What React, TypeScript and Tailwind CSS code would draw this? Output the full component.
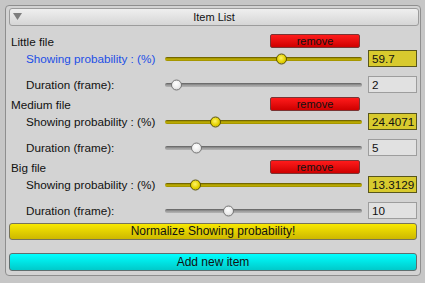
import React from "react";

type Item = { name: string; prob: number; duration: number; focused?: boolean };

const items: Item[] = [
  { name: "Little file", prob: 59.7, duration: 2, focused: true },
  { name: "Medium file", prob: 24.4071, duration: 5 },
  { name: "Big file", prob: 13.3129, duration: 10 },
];

// slider: thumb position from value
const Slider = ({ value, min, max, yellow }: { value: number; min: number; max: number; yellow?: boolean }) => {
  const t = (value - min) / (max - min);
  return (
    <div className="relative w-[197px] h-full flex items-center">
      <div
        className={
          yellow
            ? "w-full h-[4px] rounded-full bg-gradient-to-b from-[#5a5000] via-[#c4b300] to-[#9c8d00]"
            : "w-full h-[4px] rounded-full bg-gradient-to-b from-[#5e5e5e] via-[#9a9a9a] to-[#b4b4b4]"
        }
      />
      <div
        className={
          yellow
            ? "absolute top-1/2 -translate-y-1/2 w-[11px] h-[11px] rounded-full border border-[#5c5400] bg-[radial-gradient(circle_at_45%_40%,#fff36a,#e4d200_55%,#b8a800)]"
            : "absolute top-1/2 -translate-y-1/2 w-[11px] h-[11px] rounded-full border border-[#777] bg-[radial-gradient(circle_at_45%_35%,#ffffff,#ececec_55%,#c4c4c4)]"
        }
        style={{ left: `calc(${t} * (100% - 11px))` }}
      />
    </div>
  );
};

const Row = ({ label, blue, children, box, yellow }: { label: string; blue?: boolean; children: React.ReactNode; box: string; yellow?: boolean }) => (
  <div className="flex h-[17px] items-stretch">
    <span className={"w-[156px] pl-[17px] leading-[17px] " + (blue ? "text-[#1d4fe6]" : "text-[#111]")}>{label}</span>
    {children}
    <div
      className={
        yellow
          ? "ml-[6px] w-[49px] border border-[#58561c] bg-[#d8ca2e] pl-[3px] leading-[15px] text-[#111]"
          : "ml-[6px] w-[49px] border border-[#9d9d9d] bg-[#e1e1e1] pl-[3px] leading-[15px] text-[#111]"
      }
    >
      {box}
    </div>
  </div>
);

export default function App() {
  return (
    <div className="w-[425px] h-[283px] bg-[#c6c6c6] pl-[5px] pr-[4px] pt-[5px] pb-[7px] flex font-['Liberation_Sans',Arial,sans-serif] text-[11.7px]">
      <div className="flex-1 min-w-0 flex flex-col border border-[#8e8e8e] rounded-[4px] bg-[#d3d3d3] pl-[3px] pr-[1px] pt-[2px]">
        {/* header */}
        <div className="relative h-[18px] rounded-[3px] border border-[#9c9c9c] bg-gradient-to-b from-[#efefef] to-[#d6d6d6] flex items-center justify-center text-[11px] text-[#111]">
          <svg className="absolute left-[3px] top-[4px]" width="9" height="7" viewBox="0 0 9 7">
            <polygon points="0,0 9,0 4.5,7" fill="#7e7e7e" />
          </svg>
          Item List
        </div>

        <div className="flex flex-col mt-[8px] pr-[2px]">
          {items.map((it) => (
            <div key={it.name} className="flex flex-col">
              <div className="flex h-[16px] items-start">
                <span className="pl-[2px] leading-[16px] text-[#111]">{it.name}</span>
                <button className="ml-auto mr-[57px] w-[90px] h-[14px] rounded-[2px] border border-[#7a3434] bg-gradient-to-b from-[#ff1a1a] to-[#cf0000] text-[11px] leading-[12px] text-[#111]">
                  remove
                </button>
              </div>
              <Row label="Showing probability : (%)" blue={it.focused} box={String(it.prob)} yellow>
                <Slider value={it.prob} min={0} max={100} yellow />
              </Row>
              <div className="h-[9px]" />
              <Row label="Duration (frame):" box={String(it.duration)}>
                <Slider value={it.duration} min={1} max={30} />
              </Row>
              <div className="h-[4px]" />
            </div>
          ))}
          <button className="h-[17px] rounded-[3px] border border-[#77735a] bg-gradient-to-b from-[#f8e800] to-[#cdb800] text-[12px] leading-[15px] text-[#111]">
            Normalize Showing probability!
          </button>
          <button className="mt-[13px] h-[18px] rounded-[3px] border border-[#5f6e6e] bg-gradient-to-b from-[#00ffff] to-[#00caca] text-[12px] leading-[16px] text-[#111]">
            Add new item
          </button>
        </div>
      </div>
    </div>
  );
}
